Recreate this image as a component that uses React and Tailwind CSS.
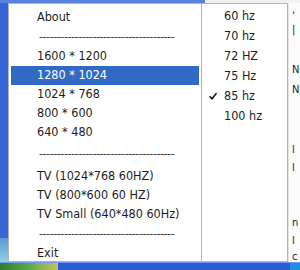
import React from "react";

const font = { fontFamily: '"DejaVu Sans Condensed","Liberation Sans",Tahoma,sans-serif' };

function Item({ children, h = "h-[19px]", active }) {
  return (
    <div className={`${h} flex items-center mx-[2px] ${active ? "bg-[#316ac5] text-white" : "text-[#1e1e1e]"}`}>
      <span className="pl-[26px] whitespace-nowrap">{children}</span>
    </div>
  );
}

function Sep({ h }) {
  return (
    <div className={`${h} flex items-center mx-[2px]`}>
      <span className="ml-[28px] whitespace-nowrap tracking-[-0.5px] text-[#444]">
        --------------------------------------
      </span>
    </div>
  );
}

function Sub({ children, checked }) {
  return (
    <div className="h-5 flex items-center text-[#1e1e1e]">
      <span className="w-[22px] flex justify-center">
        {checked && (
          <svg width="8" height="8" viewBox="0 0 8 8">
            <path d="M0.5 4.2 L3 6.8 L7.5 1.2" stroke="#111" strokeWidth="1.6" fill="none" />
          </svg>
        )}
      </span>
      <span className="whitespace-nowrap">{children}</span>
    </div>
  );
}

export default function App() {
  return (
    <div className="w-[300px] h-[270px] flex flex-col bg-white overflow-hidden text-[12.5px]" style={font}>
      <div className="h-[3px] bg-[#6a8ee2] flex">
        <div className="w-[205px] bg-[#5b82de]" />
        <div className="flex-1 bg-[#f2f2f2]" />
      </div>
      <div className="flex flex-1 min-h-0">
        <div className="w-[8px] flex flex-col">
          <div className="flex-1 bg-[#3566d8]" />
          <div className="h-[24px] bg-gradient-to-b from-[#5a9ad8] to-[#8fd0e8]" />
        </div>
        <div className="w-[194px] border border-[#b8b4a8] bg-white pt-[4px]">
          <Item>About</Item>
          <Sep h="h-[20px]" />
          <Item>1600 * 1200</Item>
          <Item active>1280 * 1024</Item>
          <Item>1024 * 768</Item>
          <Item>800 * 600</Item>
          <Item>640 * 480</Item>
          <Sep h="h-[25px]" />
          <Item>TV (1024*768 60HZ)</Item>
          <Item>TV (800*600 60 HZ)</Item>
          <Item>TV Small (640*480 60Hz)</Item>
          <Sep h="h-[20px]" />
          <Item>Exit</Item>
        </div>
        <div className="w-[86px] border border-l-0 border-[#b8b4a8] bg-white pt-[2px]">
          <Sub>60 hz</Sub>
          <Sub>70 hz</Sub>
          <Sub>72 HZ</Sub>
          <Sub>75 Hz</Sub>
          <Sub checked>85 hz</Sub>
          <Sub>100 hz</Sub>
        </div>
        <div className="flex-1 flex flex-col text-[#222] text-[11px] leading-none pl-[3px] bg-[#fbfbfb] border-l border-[#e4e4e4]">
          <div className="h-[12px] flex items-end">,</div>
          <div className="h-[20px] flex items-end">|</div>
          <div className="h-[40px] flex items-end">N</div>
          <div className="h-[20px] flex items-end">N</div>
          <div className="h-[60px] flex items-end">l</div>
          <div className="h-[18px] flex items-end">l</div>
          <div className="h-[55px] flex items-end">n</div>
          <div className="h-[18px] flex items-end">l</div>
          <div className="h-[16px] flex items-end">c</div>
        </div>
      </div>
      <div className="h-[8px] flex border-t border-[#6b9af0]">
        <div className="w-[58px] bg-gradient-to-r from-[#2f7d2f] via-[#5aa84a] to-[#c8c060]" />
        <div className="flex-1 bg-[#2a5bd6]" />
        <div className="w-[10px] bg-[#1c8fe0]" />
      </div>
    </div>
  );
}
